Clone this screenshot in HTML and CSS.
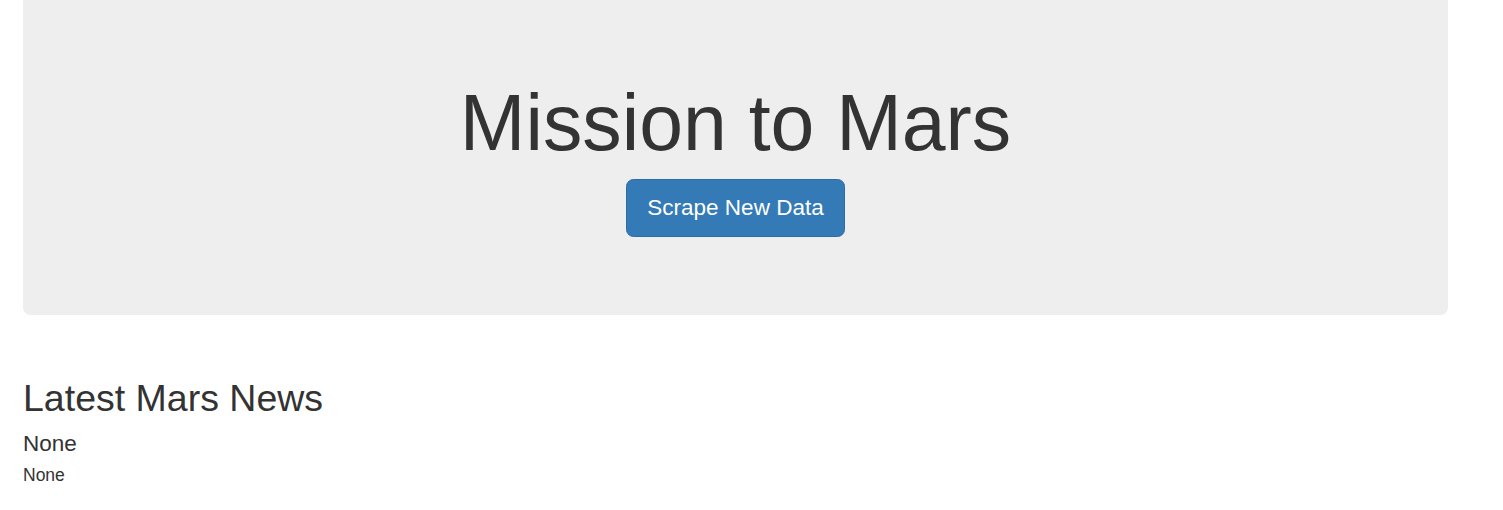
FILE: index.html
```html
<!DOCTYPE html>
<html lang="en">
<head>
<meta charset="utf-8">
<title>Mission to Mars</title>
<link rel="stylesheet" href="styles.css">
</head>
<body>
<div class="container">
  <div class="jumbotron">
    <h1 class="title">Mission to Mars</h1>
    <p class="actions"><a class="btn" href="#">Scrape New Data</a></p>
  </div>
  <section class="news">
    <h2 class="news-heading">Latest Mars News</h2>
    <h4 class="news-title">None</h4>
    <p class="news-body">None</p>
  </section>
</div>
</body>
</html>
```

FILE: styles.css
```css
* { box-sizing: border-box; }
html, body { margin: 0; padding: 0; }
body {
  font-family: "Liberation Sans", Arial, Helvetica, sans-serif;
  font-size: 17.5px;
  line-height: 1.42857;
  color: #333;
  background: #fff;
}
.container {
  width: 1425px;
  margin-left: 23px;
}
.jumbotron {
  background: #eeeeee;
  border-radius: 0 0 7.5px 7.5px;
  padding: 55px 75px 59px;
  margin-bottom: 38.5px;
  text-align: center;
}
.title {
  font-size: 78.75px;
  line-height: 1.1;
  font-weight: 500;
  margin: 25px 0 12.5px;
}
.actions {
  margin: 0 0 18.75px;
}
.btn {
  display: inline-block;
  font-size: 22.5px;
  line-height: 30px;
  padding: 13px 20px;
  color: #fff;
  background: #337ab7;
  border: 1.25px solid #2e6da4;
  border-radius: 7.5px;
  text-decoration: none;
}
.news {
  display: flow-root;
}
.news-heading {
  font-size: 37.5px;
  line-height: 1.1;
  font-weight: 500;
  margin: 25px 0 12.5px;
}
.news-title {
  font-size: 22.5px;
  line-height: 1.1;
  font-weight: 500;
  margin: 12.5px 0 6.5px;
}
.news-body {
  margin: 0 0 12.5px;
}
```
